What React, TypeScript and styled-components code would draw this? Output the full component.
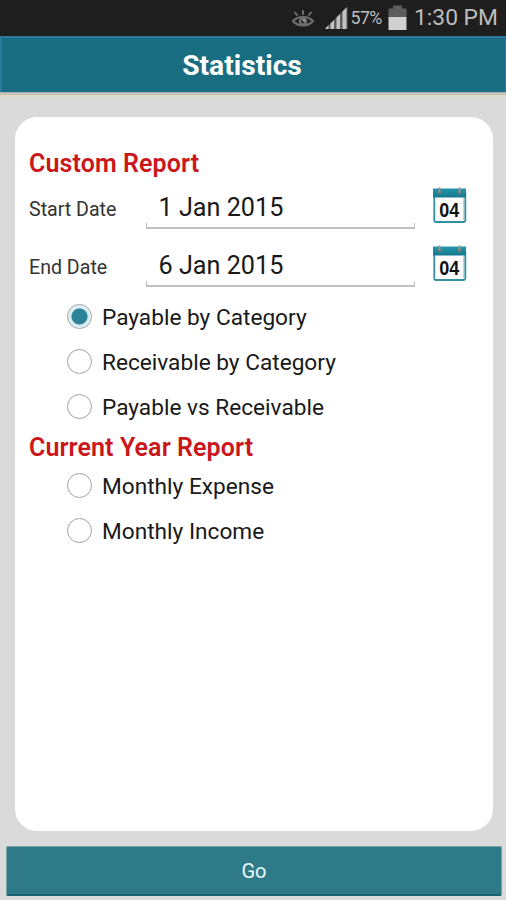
import React, { useState } from "react";
import styled, { createGlobalStyle } from "styled-components";

const GlobalStyle = createGlobalStyle`
  * { box-sizing: border-box; }
  body { margin: 0; background: #dadada; font-family: Roboto, "Liberation Sans", sans-serif; }
`;

const Screen = styled.div`
  display: flex;
  flex-direction: column;
  width: 506px;
  height: 900px;
  overflow: hidden;
  background: #dadada;
`;

const StatusBar = styled.div`
  display: flex;
  align-items: center;
  justify-content: flex-end;
  height: 36px;
  flex: none;
  padding-right: 9px;
  background: #1e1e1e;
  color: #bdbdbd;
`;

const StatusIcons = styled.div`
  display: flex;
  align-items: center;
  gap: 9px;
`;

const BatteryLevel = styled.span`
  width: 32px;
  margin: 0 5px 0 3px;
  font-size: 17.8px;
  letter-spacing: -0.6px;
  line-height: 36px;
  white-space: nowrap;
`;

const Clock = styled.span`
  width: 83px;
  margin-left: 7.5px;
  font-size: 22.8px;
  line-height: 36px;
  white-space: nowrap;
`;

const Header = styled.header`
  display: flex;
  align-items: center;
  justify-content: center;
  height: 56px;
  flex: none;
  padding-right: 23px;
  border: 2px solid #2f78a0;
  border-right-width: 1px;
  border-bottom: 0;
  background: #196d80;
`;

const Title = styled.h1`
  margin: 0;
  padding-top: 2px;
  color: #fff;
  font-size: 28.2px;
  font-weight: 700;
  line-height: 54px;
`;

const HeaderRule = styled.div`
  height: 5px;
  flex: none;
  background: linear-gradient(#a9b3b3 0 1px, #c5c2b5 1px 3px, #dcdcc6 3px);
`;

const Card = styled.main`
  width: 478px;
  height: 714px;
  flex: none;
  margin: 20px 0 0 14.5px;
  padding: 30px 0 0 14.5px;
  border-radius: 22px;
  background: #fff;
`;

const Heading = styled.h2`
  margin: 0;
  height: 32px;
  color: #c9171b;
  font-size: 25px;
  font-weight: 600;
  line-height: 34px;
  letter-spacing: 0.1px;
`;

const DateRow = styled.div`
  display: grid;
  grid-template-columns: 117px 269px 52px;
  height: 57.5px;
`;

const DateLabel = styled.label`
  padding-top: 19px;
  color: #333;
  font-size: 19.6px;
  line-height: 24px;
`;

const DateField = styled.div`
  display: flex;
  flex-direction: column;
  justify-content: flex-end;
  height: 50px;
`;

const DateValue = styled.span`
  height: 30px;
  padding-left: 12.5px;
  color: #191919;
  font-size: 25.2px;
  line-height: 30px;
`;

const Underline = styled.div`
  height: 6px;
  border: 2px solid #c1c1c1;
  border-width: 0 1px 2px;
`;

const CalendarButton = styled.button`
  width: 35px;
  height: 38px;
  margin: 7px 0 0 17px;
  padding: 0;
  border: 0;
  background: none;
`;

const RadioGroup = styled.div`
  display: flex;
  flex-direction: column;
  padding-left: 37.5px;
`;

const ReportSection = styled.section`
  padding-top: 2px;
`;

const RadioRow = styled.label`
  display: flex;
  align-items: center;
  height: 45px;
`;

const RadioInput = styled.input`
  appearance: none;
  width: 25px;
  height: 25px;
  margin: 0 10.5px 0 0;
  border: 1.5px solid #a3a3a3;
  border-radius: 50%;
  background: #fff;
  &:checked {
    background: radial-gradient(circle, #2c8296 0 7.5px, #d3eef3 8.5px 10px, #eef5f6 11px);
  }
`;

const RadioText = styled.span`
  padding-top: 2px;
  color: #191919;
  font-size: 22.65px;
  line-height: 30px;
`;

const GoButton = styled.button`
  width: 496px;
  height: 50px;
  flex: none;
  margin: 15px 0 0 6px;
  padding: 2px 0 0;
  border: 1px solid #75a0a8;
  border-bottom: 2px solid #1b606e;
  border-radius: 2px;
  background: #2f7a89;
  color: #e9fbff;
  font: 400 20px/45px Roboto, sans-serif;
`;

const EyeIcon = () => (
  <svg width="24" height="20" viewBox="0 0 24 20" fill="none" stroke="#6e6e6e" strokeWidth="2" strokeLinecap="round">
    <path d="M2 13C7 7.5 17 7.5 22 13C17 19 7 19 2 13Z" />
    <circle cx="12" cy="13.5" r="3" strokeWidth="2.6" />
    <circle cx="13" cy="12.5" r="1.2" fill="#aaa" stroke="none" />
    <path d="M12 6V3M6 7L4 4.5M18 7L20 4.5" />
  </svg>
);

const SignalIcon = () => (
  <svg width="24" height="24" viewBox="0 0 24 24">
    <path d="M1 23L23.5 0.5V23Z" fill="#5c5c5c" />
    <path d="M1 23L4.5 19V23ZM6.5 23V17.5L10 14V23ZM12.5 23V11.5L16 8V23ZM18.5 23V5.5L22.5 1.5V23Z" fill="#c2c2c2" />
  </svg>
);

const BatteryIcon = () => (
  <svg width="19" height="26" viewBox="0 0 19 26">
    <path d="M0.5 3.5H5V0.5H14V3.5H18.5V12H0.5Z" fill="#5d5d5d" />
    <path d="M0.5 12H18.5V25H0.5Z" fill="#d0d0d0" />
  </svg>
);

const CalendarIcon = () => (
  <svg width="35" height="38" viewBox="0 0 35 38">
    <defs>
      <linearGradient id="calendarTop" x1="0" y1="0" x2="0" y2="1">
        <stop offset="0" stopColor="#2596aa" />
        <stop offset="1" stopColor="#12788e" />
      </linearGradient>
    </defs>
    <rect x="2.3" y="5" width="31" height="31" rx="1.5" fill="#fff" stroke="#3390a3" strokeWidth="1.8" />
    <path d="M31.5 12V34.5" stroke="#b5d9df" />
    <path d="M1 2.5H34V11.5H1Z" fill="url(#calendarTop)" />
    <g fill="#68777b">
      <circle cx="7.5" cy="6.5" r="2" />
      <circle cx="27.5" cy="6.5" r="2" />
    </g>
    <path d="M7.5 1.5V6.5M27.5 1.5V6.5" stroke="#8d9698" strokeWidth="2" />
    <text x="17.3" y="30.5" textAnchor="middle" textLength="20" lengthAdjust="spacingAndGlyphs" fontFamily="Liberation Sans, sans-serif" fontSize="20" fontWeight="700" fill="#111">
      04
    </text>
  </svg>
);

const dates = [
  { label: "Start Date", value: "1 Jan 2015" },
  { label: "End Date", value: "6 Jan 2015" },
];

const customReports = ["Payable by Category", "Receivable by Category", "Payable vs Receivable"];
const yearReports = ["Monthly Expense", "Monthly Income"];

export default function App() {
  const [selected, setSelected] = useState("Payable by Category");

  const renderOptions = (options: string[]) => (
    <RadioGroup>
      {options.map((label) => (
        <RadioRow key={label}>
          <RadioInput type="radio" name="report" checked={selected === label} onChange={() => setSelected(label)} />
          <RadioText>{label}</RadioText>
        </RadioRow>
      ))}
    </RadioGroup>
  );

  return (
    <Screen>
      <GlobalStyle />
      <StatusBar>
        <StatusIcons>
          <EyeIcon />
          <SignalIcon />
        </StatusIcons>
        <BatteryLevel>57%</BatteryLevel>
        <BatteryIcon />
        <Clock>1:30 PM</Clock>
      </StatusBar>
      <Header>
        <Title>Statistics</Title>
      </Header>
      <HeaderRule />
      <Card>
        <Heading>Custom Report</Heading>
        {dates.map(({ label, value }) => (
          <DateRow key={label}>
            <DateLabel>{label}</DateLabel>
            <DateField>
              <DateValue>{value}</DateValue>
              <Underline />
            </DateField>
            <CalendarButton aria-label={label}>
              <CalendarIcon />
            </CalendarButton>
          </DateRow>
        ))}
        {renderOptions(customReports)}
        <ReportSection>
          <Heading>Current Year Report</Heading>
          {renderOptions(yearReports)}
        </ReportSection>
      </Card>
      <GoButton>Go</GoButton>
    </Screen>
  );
}
